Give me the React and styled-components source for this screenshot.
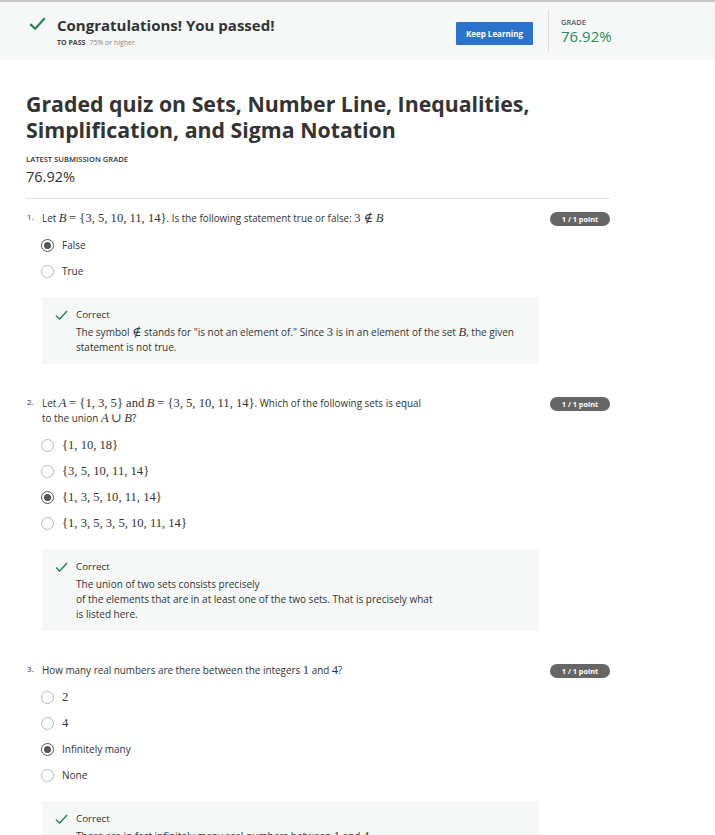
import React from "react";
import styled, { createGlobalStyle } from "styled-components";

const Global = createGlobalStyle`
  html, body { margin: 0; padding: 0; background: #ffffff; }
  body { font-family: "Open Sans", "Noto Sans", sans-serif; color: #1f1f1f; }
  * { box-sizing: border-box; }
`;

const Header = styled.header`
  display: flex;
  align-items: center;
  height: 60px;
  background: #f5f8f7;
  border-top: 2px solid #c9c9c9;
  padding-left: 29px;
`;

const PassBlock = styled.div`
  flex: 1;
  display: flex;
  align-items: flex-start;
  gap: 11px;
`;

const PassIcon = styled.div`
  padding-top: 4px;
`;

const PassText = styled.div`
  display: flex;
  flex-direction: column;
  margin-top: 2px;
`;

const PassTitle = styled.div`
  font-size: 15px;
  font-weight: 700;
  line-height: 20px;
  color: #333;
`;

const PassMeta = styled.div`
  font-size: 7px;
  line-height: 12px;
  color: #888;
  margin-top: 2px;
  b { color: #444; font-weight: 700; margin-right: 4px; }
`;

const Button = styled.button`
  border: none;
  background: #2a73cc;
  color: #fff;
  font-family: inherit;
  font-weight: 700;
  font-size: 8px;
  height: 23px;
  width: 77px;
  padding: 0;
  margin-top: 4px;
  border-radius: 1px;
`;

const Divider = styled.div`
  width: 1px;
  height: 42px;
  background: #dcdcdc;
  margin: 0 12px 0 15px;
`;

const GradeBlock = styled.div`
  width: 154px;
  display: flex;
  flex-direction: column;
`;

const GradeLabel = styled.div`
  font-size: 7.5px;
  font-weight: 600;
  color: #555;
  line-height: 10px;
`;

const GradeValue = styled.div`
  font-size: 15px;
  color: #2a8a5c;
  line-height: 18px;
`;

const Main = styled.main`
  padding: 0 105px 0 26px;
`;

const Title = styled.h1`
  margin: 31px 0 0;
  font-size: 21.3px;
  line-height: 26px;
  font-weight: 700;
  color: #333;
`;

const SmallLabel = styled.div`
  margin-top: 11px;
  font-size: 7.6px;
  line-height: 10px;
  font-weight: 600;
  color: #333;
`;

const BigGrade = styled.div`
  margin-top: 4px;
  font-size: 14.5px;
  line-height: 18px;
  color: #333;
`;

const Rule = styled.hr`
  border: none;
  border-top: 1px solid #dedede;
  margin: 12px 0 0;
`;

const Question = styled.section`
  margin-top: ${(p) => p.$top}px;
`;

const QuestionRow = styled.div`
  display: grid;
  grid-template-columns: 16px 1fr auto;
  align-items: start;
`;

const QNum = styled.span`
  font-size: 8px;
  line-height: 12px;
  color: #333;
  padding-left: 1px;
`;

const QText = styled.div`
  font-size: 9.9px;
  line-height: 15px;
  color: #333;
`;

const Badge = styled.span`
  background: #666;
  color: #fff;
  font-weight: 700;
  font-size: 7.3px;
  line-height: 14px;
  height: 14px;
  border-radius: 7px;
  width: 60px;
  text-align: center;
  margin-top: 1px;
`;

const M = styled.span`
  font-family: "Liberation Serif", "DejaVu Serif", serif;
  font-size: 12.6px;
  font-style: ${(p) => (p.$i ? "italic" : "normal")};
  color: #333;
`;

const Options = styled.div`
  display: flex;
  flex-direction: column;
  margin: 6px 0 0 15px;
`;

const Option = styled.div`
  display: flex;
  align-items: center;
  height: 26px;
  gap: 8px;
  font-size: 10px;
  color: #333;
`;

const Radio = styled.span`
  width: 13px;
  height: 13px;
  border-radius: 50%;
  border: 1px solid ${(p) => (p.$on ? "#555" : "#b8b8b8")};
  display: flex;
  align-items: center;
  justify-content: center;
  flex-shrink: 0;
  &::after {
    content: "";
    width: 7px;
    height: 7px;
    border-radius: 50%;
    background: ${(p) => (p.$on ? "#555" : "transparent")};
  }
`;

const Feedback = styled.div`
  margin: 13px 0 0 16px;
  width: 497px;
  background: #f5f8f7;
  display: grid;
  grid-template-columns: 21px 1fr;
  padding: 10px 16px 9px 13px;
`;

const FbTitle = styled.div`
  font-size: 9.8px;
  line-height: 15px;
  color: #333;
`;

const FbText = styled.div`
  grid-column: 2;
  margin-top: 3px;
  font-size: 10px;
  line-height: 15px;
  color: #333;
`;

const CheckCell = styled.div`
  display: flex;
  align-items: center;
  height: 15px;
`;

const Check = ({ w = 13, h = 10, sw = 1.8 }) => (
  <svg width={w} height={h} viewBox="0 0 16 12" preserveAspectRatio="none" style={{ display: "block" }}>
    <path d="M1.2 6.6 L5.8 10.8 L14.8 1.2" fill="none" stroke="#1f8354" strokeWidth={sw} />
  </svg>
);

const Radios = ({ items }) => (
  <Options>
    {items.map((it, i) => (
      <Option key={i}>
        <Radio $on={it.on} />
        <span>{it.label}</span>
      </Option>
    ))}
  </Options>
);

const Fb = ({ children }) => (
  <Feedback>
    <CheckCell>
      <Check />
    </CheckCell>
    <FbTitle>Correct</FbTitle>
    <FbText>{children}</FbText>
  </Feedback>
);

export default function App() {
  return (
    <>
      <Global />
      <Header>
        <PassBlock>
          <PassIcon>
            <Check w={17} h={13} sw={2} />
          </PassIcon>
          <PassText>
            <PassTitle>Congratulations! You passed!</PassTitle>
            <PassMeta>
              <b>TO PASS</b>75% or higher
            </PassMeta>
          </PassText>
        </PassBlock>
        <Button>Keep Learning</Button>
        <Divider />
        <GradeBlock>
          <GradeLabel>GRADE</GradeLabel>
          <GradeValue>76.92%</GradeValue>
        </GradeBlock>
      </Header>
      <Main>
        <Title>
          Graded quiz on Sets, Number Line, Inequalities,
          <br />
          Simplification, and Sigma Notation
        </Title>
        <SmallLabel>LATEST SUBMISSION GRADE</SmallLabel>
        <BigGrade>76.92%</BigGrade>
        <Rule />

        <Question $top={12}>
          <QuestionRow>
            <QNum>1.</QNum>
            <QText>
              Let <M $i>B</M> <M>= {"{"}3, 5, 10, 11, 14{"}"}</M>. Is the following statement true or false: <M>3 ∉</M> <M $i>B</M>
            </QText>
            <Badge>1 / 1 point</Badge>
          </QuestionRow>
          <Radios items={[{ label: "False", on: true }, { label: "True" }]} />
          <Fb>
            The symbol <M>∉</M> stands for "is not an element of." Since <M>3</M> is in an element of the set <M $i>B</M>, the given
            <br />
            statement is not true.
          </Fb>
        </Question>

        <Question $top={32}>
          <QuestionRow>
            <QNum>2.</QNum>
            <QText>
              Let <M $i>A</M> <M>= {"{"}1, 3, 5{"}"} and</M> <M $i>B</M> <M>= {"{"}3, 5, 10, 11, 14{"}"}</M>. Which of the following sets is equal
              <br />
              to the union <M $i>A</M> <M>∪</M> <M $i>B</M>?
            </QText>
            <Badge>1 / 1 point</Badge>
          </QuestionRow>
          <Radios
            items={[
              { label: <M>{"{1, 10, 18}"}</M> },
              { label: <M>{"{3, 5, 10, 11, 14}"}</M> },
              { label: <M>{"{1, 3, 5, 10, 11, 14}"}</M>, on: true },
              { label: <M>{"{1, 3, 5, 3, 5, 10, 11, 14}"}</M> },
            ]}
          />
          <Fb>
            The union of two sets consists precisely
            <br />
            of the elements that are in at least one of the two sets. That is precisely what
            <br />
            is listed here.
          </Fb>
        </Question>

        <Question $top={32}>
          <QuestionRow>
            <QNum>3.</QNum>
            <QText>
              How many real numbers are there between the integers <M>1</M> and <M>4</M>?
            </QText>
            <Badge>1 / 1 point</Badge>
          </QuestionRow>
          <Radios
            items={[
              { label: <M>2</M> },
              { label: <M>4</M> },
              { label: "Infinitely many", on: true },
              { label: "None" },
            ]}
          />
          <Fb>
            There are in fact infinitely many real numbers between <M>1</M> and <M>4</M>.
          </Fb>
        </Question>
      </Main>
    </>
  );
}
